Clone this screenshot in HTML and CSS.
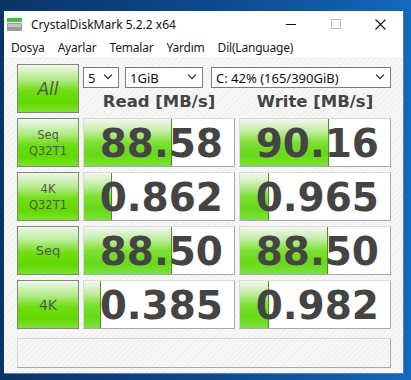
FILE: index.html
```html
<!DOCTYPE html>
<html>
<head>
    <meta charset="utf-8">
    <link rel="stylesheet" href="styles.css">
</head>
<body>
    <div class="window">
        <div class="titlebar">
            <svg class="app_icon" width="16" height="16" viewBox="0 0 16 16">
                <rect x="0" y="1" width="15" height="4" fill="#3fc23f"/>
                <rect x="0" y="6" width="15" height="8" rx="1" fill="#9a9a9a"/>
                <rect x="1" y="7" width="13" height="3" fill="#c4c4c4"/>
                <rect x="11" y="11" width="2" height="1" fill="#4fd04f"/>
            </svg>
            <span class="title">CrystalDiskMark 5.2.2 x64</span>
            <div class="caption_btns">
                <span class="cap_btn"><span class="min_line"></span></span>
                <span class="cap_btn"><span class="max_box"></span></span>
                <span class="cap_btn">
                    <svg width="11" height="11" viewBox="0 0 11 11"><path d="M0.5 0.5 L10.5 10.5 M10.5 0.5 L0.5 10.5" stroke="#111" stroke-width="1.1"/></svg>
                </span>
            </div>
        </div>
        <div class="menubar">
            <span class="menu_item">Dosya</span>
            <span class="menu_item">Ayarlar</span>
            <span class="menu_item">Temalar</span>
            <span class="menu_item">Yardım</span>
            <span class="menu_item">Dil(Language)</span>
        </div>

        <div class="client">
            <div class="grid">
                <div class="btn btn_all">All</div>
                <div class="top_area">
                    <div class="selects">
                        <div class="select sel_count">5<span class="chev"></span></div>
                        <div class="select sel_size">1GiB<span class="chev"></span></div>
                        <div class="select sel_drive">C: 42% (165/390GiB)<span class="chev"></span></div>
                    </div>
                    <div class="headers">
                        <div class="col_head">Read [MB/s]</div>
                        <div class="col_head">Write [MB/s]</div>
                    </div>
                </div>

                <div class="btn btn_small">Seq<br>Q32T1</div>
                <div class="cell"><div class="bar" style="width: 88px"></div><span class="val">88.58</span></div>
                <div class="cell"><div class="bar" style="width: 89px"></div><span class="val">90.16</span></div>

                <div class="btn btn_small">4K<br>Q32T1</div>
                <div class="cell"><div class="bar" style="width: 28px"></div><span class="val">0.862</span></div>
                <div class="cell"><div class="bar" style="width: 29px"></div><span class="val">0.965</span></div>

                <div class="btn btn_mid">Seq</div>
                <div class="cell"><div class="bar" style="width: 88px"></div><span class="val">88.50</span></div>
                <div class="cell"><div class="bar" style="width: 88px"></div><span class="val">88.50</span></div>

                <div class="btn btn_mid btn_4k">4K</div>
                <div class="cell"><div class="bar" style="width: 17px"></div><span class="val">0.385</span></div>
                <div class="cell"><div class="bar" style="width: 29px"></div><span class="val">0.982</span></div>
            </div>
            <div class="status"></div>
        </div>
    </div>
</body>
</html>
```

FILE: styles.css
```css
* {
    margin: 0;
    padding: 0;
    box-sizing: border-box;
}

body {
    width: 411px;
    height: 380px;
    overflow: hidden;
    background: linear-gradient(90deg, #0a3466 0%, #0d4a90 55%, #1468bd 100%);
    padding: 11px 0 0 4px;
    font-family: "Noto Sans", "DejaVu Sans", sans-serif;
}

.window {
    width: 400px;
    height: 363px;
    background: #fff;
    display: flex;
    flex-direction: column;
    border-right: 1px solid #5a7fae;
    border-bottom: 1px solid #5a7fae;
}

.titlebar {
    height: 26px;
    display: flex;
    align-items: center;
    padding-left: 3px;
}

.app_icon {
    margin-top: 1px;
}

.title {
    margin-left: 8px;
    font-size: 12px;
    color: #111;
    margin-top: 1px;
}

.caption_btns {
    margin-left: auto;
    display: flex;
    height: 100%;
}

.cap_btn {
    width: 45px;
    display: flex;
    justify-content: center;
    align-items: center;
}

.min_line {
    width: 10px;
    height: 1px;
    background: #111;
}

.max_box {
    width: 10px;
    height: 10px;
    border: 1px solid #b8b8b8;
}

.menubar {
    height: 20px;
    display: flex;
    align-items: center;
    padding-left: 7px;
    font-size: 12px;
    letter-spacing: -0.2px;
    color: #1a1a1a;
    gap: 13px;
}

.client {
    flex: 1;
    background-color: #f4f4f4;
    background-image: repeating-linear-gradient(135deg, #f7f7f7 0, #f7f7f7 3px, #efefef 3px, #efefef 4px);
    padding: 7px 12px 5px 13px;
}

.grid {
    display: grid;
    grid-template-columns: 62px 152px 152px;
    grid-auto-rows: 49px;
    column-gap: 4px;
    row-gap: 5px;
}

.btn {
    border: 1px solid #7c8a7a;
    background: linear-gradient(180deg, #eef6ea 0%, #b6ec8e 30%, #6ede10 55%, #62d800 80%, #7ce22e 100%);
    color: #4d5a4b;
    display: flex;
    align-items: center;
    justify-content: center;
    text-align: center;
    font-family: "DejaVu Sans", Verdana, sans-serif;
}

.btn_all {
    font-size: 17px;
    font-style: italic;
}

.btn_small {
    font-size: 11.5px;
    line-height: 16px;
}

.btn_mid {
    font-size: 13px;
}

.btn_4k {
    font-size: 14px;
}

.top_area {
    grid-column: 2 / 4;
    display: flex;
    flex-direction: column;
}

.selects {
    display: flex;
    margin-top: 3px;
    height: 21px;
}

.select {
    height: 21px;
    border: 1px solid #7a7a7a;
    background: #fff;
    font-size: 13px;
    color: #111;
    display: flex;
    align-items: center;
    padding-left: 4px;
    position: relative;
}

.sel_count {
    width: 36px;
}

.sel_size {
    width: 78px;
    margin-left: 6px;
}

.sel_drive {
    width: 180px;
    margin-left: 8px;
}

.chev {
    position: absolute;
    right: 7px;
    top: 4px;
    width: 6px;
    height: 6px;
    border-right: 1.5px solid #111;
    border-bottom: 1.5px solid #111;
    transform: rotate(45deg);
}

.headers {
    display: grid;
    grid-template-columns: 152px 152px;
    column-gap: 4px;
    flex: 1;
    align-items: center;
}

.col_head {
    text-align: center;
    font-family: "DejaVu Sans", Verdana, sans-serif;
    font-weight: bold;
    font-size: 16.5px;
    color: #444;
    padding-top: 2px;
}

.cell {
    position: relative;
    background: #fff;
    border-top: 1px solid #dadada;
    border-left: 1px solid #dadada;
    border-right: 1px solid #a8a8a8;
    border-bottom: 1px solid #a8a8a8;
    display: flex;
    align-items: center;
    justify-content: flex-end;
    padding-right: 11px;
}

.bar {
    position: absolute;
    left: 0;
    top: 0;
    bottom: 0;
    background: linear-gradient(180deg, #f3f6f1 0%, #c4eea6 25%, #7ee034 50%, #66d818 75%, #7ce23a 100%);
    border-right: 1px solid #3f9a1c;
}

.val {
    position: relative;
    font-family: "DejaVu Sans", Verdana, sans-serif;
    font-weight: bold;
    font-size: 39px;
    color: #444;
    line-height: 1;
    margin-top: 1px;
}

.status {
    margin-top: 9px;
    height: 30px;
    border-top: 1px solid #d6d6d6;
    border-left: 1px solid #d6d6d6;
    border-right: 1px solid #a8a8a8;
    border-bottom: 1px solid #a8a8a8;
    background: transparent;
}
```
